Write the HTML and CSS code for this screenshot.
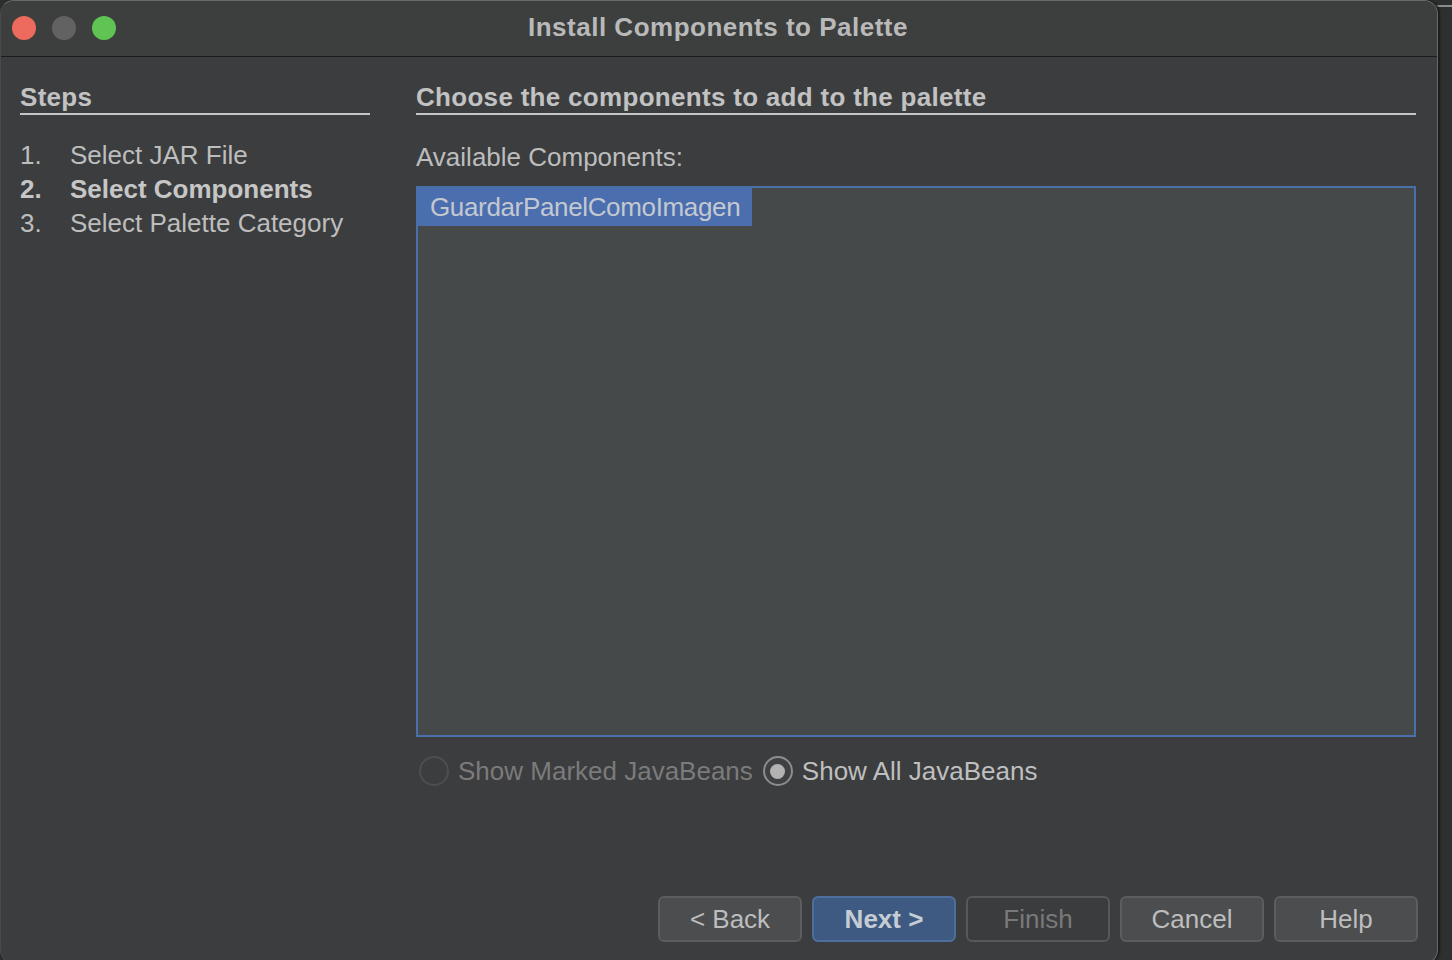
FILE: index.html
```html
<!DOCTYPE html>
<html lang="en">
<head>
<meta charset="utf-8">
<title>Install Components to Palette</title>
<link rel="stylesheet" href="styles.css">
</head>
<body>
<div class="desktop">
  <div class="back-window"></div>
  <div class="window">
    <div class="titlebar">
      <div class="lights">
        <span class="light red"></span>
        <span class="light gray"></span>
        <span class="light green"></span>
      </div>
      <div class="title">Install Components to Palette</div>
    </div>
    <div class="body">
      <div class="columns">
        <div class="steps">
          <div class="heading">Steps</div>
          <ol class="step-list">
            <li class="step"><span class="num">1.</span><span>Select JAR File</span></li>
            <li class="step current"><span class="num">2.</span><span>Select Components</span></li>
            <li class="step"><span class="num">3.</span><span>Select Palette Category</span></li>
          </ol>
        </div>
        <div class="main">
          <div class="heading">Choose the components to add to the palette</div>
          <div class="label">Available Components:</div>
          <div class="listbox">
            <div class="item selected">GuardarPanelComoImagen</div>
          </div>
          <div class="radios">
            <label class="radio disabled"><span class="circle"></span><span>Show Marked JavaBeans</span></label>
            <label class="radio checked"><span class="circle"><span class="dot"></span></span><span>Show All JavaBeans</span></label>
          </div>
        </div>
      </div>
      <div class="buttons">
        <button class="btn">&lt; Back</button>
        <button class="btn primary">Next &gt;</button>
        <button class="btn disabled">Finish</button>
        <button class="btn">Cancel</button>
        <button class="btn">Help</button>
      </div>
    </div>
  </div>
</div>
</body>
</html>
```
FILE: styles.css
```css
* { box-sizing: border-box; }
html, body {
  margin: 0;
  padding: 0;
  width: 1452px;
  height: 960px;
  overflow: hidden;
  background: #2c2d2e;
  font-family: "Liberation Sans", Arial, Helvetica, sans-serif;
}
.desktop {
  position: relative;
  width: 1452px;
  height: 960px;
}
.back-window {
  position: absolute;
  left: 1420px;
  top: 5px;
  width: 60px;
  height: 960px;
  border-top: 2px solid #8c8c8c;
  background: #2e3030;
}
.window {
  position: absolute;
  left: 0;
  top: 0;
  width: 1438px;
  height: 964px;
  border-radius: 14px;
  border: 1px solid #6a6a6a;
  border-left-color: #4a4a4a;
  background: #3c3d3f;
  display: flex;
  flex-direction: column;
  overflow: hidden;
  box-shadow: 2px 0 2px #1a1a1a;
}
.titlebar {
  height: 56px;
  flex: none;
  background: #3d3f3f;
  border-bottom: 1px solid #1c1c1c;
  position: relative;
  display: flex;
  align-items: center;
  justify-content: center;
}
.lights {
  position: absolute;
  left: 11px;
  top: 15px;
  display: flex;
  gap: 16px;
}
.light {
  width: 24px;
  height: 24px;
  border-radius: 50%;
  display: block;
}
.light.red { background: #ed6a5e; }
.light.gray { background: #626262; }
.light.green { background: #5fc454; }
.title {
  color: #b9b9b9;
  font-weight: bold;
  font-size: 26px;
  letter-spacing: 0.5px;
  margin-left: -2px;
  margin-top: -2px;
}
.body {
  flex: 1;
  display: flex;
  flex-direction: column;
  padding: 24px 21px 21px 19px;
}
.columns {
  display: flex;
  gap: 46px;
}
.steps {
  width: 350px;
  flex: none;
}
.main {
  flex: 1;
  display: flex;
  flex-direction: column;
}
.heading {
  color: #c2c2c2;
  font-weight: bold;
  font-size: 26px;
  line-height: 32px;
  letter-spacing: 0.3px;
  border-bottom: 2px solid #c6c6c6;
}
.step-list {
  list-style: none;
  margin: 23px 0 0 0;
  padding: 0;
}
.step {
  display: flex;
  font-size: 26px;
  line-height: 34px;
  color: #bdbdbd;
}
.step .num {
  width: 50px;
  flex: none;
}
.step.current { font-weight: bold; color: #c6c6c6; }
.label {
  margin-top: 25px;
  font-size: 26px;
  line-height: 34px;
  color: #bdbdbd;
}
.listbox {
  margin-top: 12px;
  height: 551px;
  border: 2px solid #4a70aa;
  background: #45494a;
}
.item {
  display: inline-block;
  height: 38px;
  line-height: 38px;
  padding: 0 12px 0 12px;
  font-size: 26px;
  letter-spacing: -0.35px;
  color: #c4c8d0;
}
.item.selected { background: #4b6eaf; }
.radios {
  margin-top: 17px;
  display: flex;
  align-items: center;
  gap: 10px;
  font-size: 26px;
  line-height: 34px;
}
.radio {
  display: flex;
  align-items: center;
  gap: 9px;
  color: #bfbfbf;
}
.radio:first-child { margin-left: 3px; }
.radio.disabled { color: #7b7b7b; }
.circle {
  width: 30px;
  height: 30px;
  border-radius: 50%;
  border: 2px solid #4d4e50;
  display: flex;
  align-items: center;
  justify-content: center;
  flex: none;
}
.radio.checked .circle {
  border-color: #8d8d8d;
  background: #3f4143;
}
.dot {
  width: 15px;
  height: 15px;
  border-radius: 50%;
  background: #b3b3b3;
}
.buttons {
  margin-top: auto;
  margin-right: -2px;
  display: flex;
  justify-content: flex-end;
  gap: 10px;
}
.btn {
  width: 144px;
  height: 46px;
  border-radius: 6px;
  border: 2px solid #5b5d5f;
  background: #4b4d4f;
  color: #bdbdbd;
  font-family: inherit;
  font-size: 26px;
  padding: 0;
}
.btn.primary {
  background: #3e5a82;
  border-color: #4e6f9e;
  color: #c6ccd4;
  font-weight: bold;
}
.btn.disabled {
  background: #3b3c3e;
  border-color: #575859;
  color: #797979;
}
```
